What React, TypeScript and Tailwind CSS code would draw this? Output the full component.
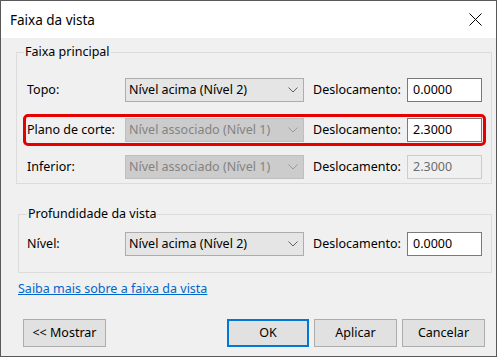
import React from "react";

const font = { fontFamily: '"Noto Sans", "Open Sans", sans-serif' };

const Combo = ({ value, disabled }: { value: string; disabled?: boolean }) => (
  <div
    className={
      "flex shrink-0 items-center justify-between w-[179px] h-[24px] border pl-[3px] pr-[5px] " +
      (disabled
        ? "bg-[#cccccc] border-[#bfbfbf] text-[#838383]"
        : "bg-[#e5e5e5] border-[#adadad] text-black")
    }
  >
    <span className="whitespace-nowrap">{value}</span>
    <svg width="10" height="6" viewBox="0 0 10 6" className="shrink-0">
      <path
        d="M0.5 0.5 L5 5 L9.5 0.5"
        fill="none"
        stroke={disabled ? "#9a9a9a" : "#606060"}
        strokeWidth="1"
      />
    </svg>
  </div>
);

const Field = ({ value, disabled }: { value: string; disabled?: boolean }) => (
  <div
    className={
      "flex shrink-0 items-center w-[75px] h-[24px] border pl-[5px] " +
      (disabled
        ? "bg-[#f0f0f0] border-[#cccccc] text-[#6d6d6d]"
        : "bg-white border-[#7a7a7a] text-black")
    }
  >
    {value}
  </div>
);

const Row = ({
  label,
  combo,
  offset,
  comboDisabled,
  fieldDisabled,
  highlight,
}: {
  label: string;
  combo: string;
  offset: string;
  comboDisabled?: boolean;
  fieldDisabled?: boolean;
  highlight?: boolean;
}) => (
  <div
    className={
      "flex items-center w-[463px] " +
      (highlight
        ? "h-[32px] border-[3px] border-[#e60000] rounded-[5px]"
        : "h-[24px] border-x-[3px] border-transparent")
    }
  >
    <span className="w-[99px] shrink-0 pl-[1px] whitespace-nowrap text-black">{label}</span>
    <Combo value={combo} disabled={comboDisabled} />
    <span className="w-[103px] shrink-0 pl-[9px] whitespace-nowrap text-black">Deslocamento:</span>
    <Field value={offset} disabled={fieldDisabled} />
  </div>
);

const Button = ({ label, primary }: { label: string; primary?: boolean }) => (
  <button
    className={
      "h-[28px] bg-[#e1e1e1] text-black flex items-center justify-center " +
      (primary ? "w-[82px] border-2 border-[#0078d7]" : "w-[83px] border border-[#adadad]")
    }
  >
    {label}
  </button>
);

export default function App() {
  return (
    <div
      className="w-[497px] h-[357px] border border-[#595959] flex flex-col text-[12.5px] leading-[16px]"
      style={font}
    >
      <div className="h-[37px] bg-white flex items-center justify-between pl-[9px] pr-[14px]">
        <span className="text-[13.5px] text-black">Faixa da vista</span>
        <svg width="13" height="13" viewBox="0 0 13 13">
          <path d="M0.5 0.5 L12.5 12.5 M12.5 0.5 L0.5 12.5" stroke="#000" strokeWidth="1" />
        </svg>
      </div>

      <div className="flex-1 bg-[#f0f0f0] flex flex-col">
        <div className="relative ml-[15px] mt-[14px] w-[476px] h-[132px] border border-[#dcdcdc] pt-[25px] pl-[6px] flex flex-col">
          <span className="absolute -top-[9px] left-[7px] bg-[#f0f0f0] px-[1px] text-black">
            Faixa principal
          </span>
          <Row label="Topo:" combo="Nível acima (Nível 2)" offset="0.0000" />
          <div className="mt-[12px]">
            <Row
              label="Plano de corte:"
              combo="Nível associado (Nível 1)"
              offset="2.3000"
              highlight
              comboDisabled
            />
          </div>
          <div className="mt-[9px]">
            <Row
              label="Inferior:"
              combo="Nível associado (Nível 1)"
              offset="2.3000"
              comboDisabled
              fieldDisabled
            />
          </div>
        </div>

        <div className="relative ml-[17px] mt-[30px] w-[474px] h-[59px] border border-[#dcdcdc] pt-[17px] pl-[4px]">
          <span className="absolute -top-[9px] left-[8px] bg-[#f0f0f0] px-[1px] text-black">
            Profundidade da vista
          </span>
          <Row label="Nível:" combo="Nível acima (Nível 2)" offset="0.0000" />
        </div>

        <a href="#" className="ml-[17px] mt-[8px] self-start text-[#0066cc] underline">
          Saiba mais sobre a faixa da vista
        </a>

        <div className="mt-auto mb-[9px] flex items-center pl-[22px] pr-[11px]">
          <Button label="<< Mostrar" />
          <div className="ml-auto flex gap-[5px]">
            <Button label="OK" primary />
            <Button label="Aplicar" />
            <Button label="Cancelar" />
          </div>
        </div>
      </div>
    </div>
  );
}
